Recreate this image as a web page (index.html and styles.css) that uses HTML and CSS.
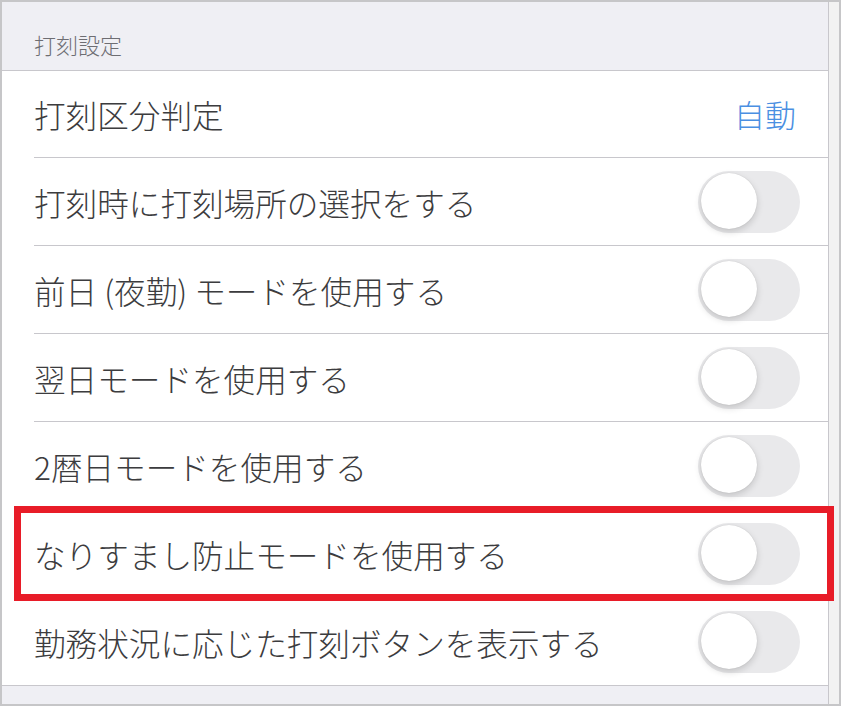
FILE: index.html
```html
<!DOCTYPE html>
<html lang="ja">
<head>
<meta charset="utf-8">
<title>打刻設定</title>
<link rel="stylesheet" href="styles.css">
</head>
<body>
<div class="frame">
  <div class="content">
    <div class="section-header">打刻設定</div>
    <div class="section">
      <div class="row"><div class="row-inner"><span class="label">打刻区分判定</span><span class="value">自動</span></div></div>
      <div class="row"><div class="row-inner"><span class="label">打刻時に打刻場所の選択をする</span><span class="switch"><span class="knob"></span></span></div></div>
      <div class="row"><div class="row-inner"><span class="label">前日 (夜勤) モードを使用する</span><span class="switch"><span class="knob"></span></span></div></div>
      <div class="row"><div class="row-inner"><span class="label">翌日モードを使用する</span><span class="switch"><span class="knob"></span></span></div></div>
      <div class="row"><div class="row-inner"><span class="label">2暦日モードを使用する</span><span class="switch"><span class="knob"></span></span></div></div>
      <div class="row"><div class="row-inner"><span class="label">なりすまし防止モードを使用する</span><span class="switch"><span class="knob"></span></span></div></div>
      <div class="row"><div class="row-inner"><span class="label">勤務状況に応じた打刻ボタンを表示する</span><span class="switch"><span class="knob"></span></span></div></div>
    </div>
    <div class="section-footer"></div>
  </div>
  <div class="strip"></div>
  <div class="highlight"></div>
</div>
</body>
</html>
```
FILE: styles.css
```css
html, body {
  margin: 0;
  padding: 0;
  background: #ffffff;
}
body {
  font-family: "Noto Sans CJK JP", "Noto Sans", sans-serif;
}
.frame {
  position: relative;
  box-sizing: border-box;
  width: 841px;
  height: 706px;
  border: 2px solid #c6c6c8;
  display: flex;
  overflow: hidden;
}
.content {
  width: 826px;
  border-right: 1px solid #c8c7cc;
  display: flex;
  flex-direction: column;
  background: #ffffff;
}
.strip {
  flex: 1;
  background: #f2f2f2;
}
.section-header {
  box-sizing: border-box;
  height: 69px;
  padding: 27px 0 0 32px;
  background: #efeff4;
  color: #6d6d72;
  font-size: 22px;
  font-weight: 300;
  line-height: 30px;
  border-bottom: 1px solid #c8c7cc;
}
.section {
  border-bottom: 1px solid #c8c7cc;
}
.row {
  padding-left: 32px;
}
.row-inner {
  box-sizing: border-box;
  height: 88px;
  display: flex;
  align-items: center;
  justify-content: space-between;
  padding-right: 28px;
  border-bottom: 1px solid #c8c7cc;
}
.row:first-child .row-inner {
  height: 87px;
  padding-right: 32px;
}
.row:last-child .row-inner {
  border-bottom: none;
  height: 87px;
}
.label {
  font-size: 31.6px;
  font-weight: 300;
  color: #3c3c3e;
  line-height: 40px;
}
.value {
  font-size: 31px;
  font-weight: 300;
  color: #4a8fe2;
  line-height: 40px;
}
.switch {
  position: relative;
  width: 102px;
  height: 62px;
  border-radius: 31px;
  background: #e9e9eb;
  flex-shrink: 0;
}
.knob {
  position: absolute;
  left: 3px;
  top: 2px;
  width: 56px;
  height: 56px;
  border-radius: 50%;
  background: #ffffff;
  box-shadow: 0 3px 7px rgba(0, 0, 0, 0.16), 0 0 1px rgba(0, 0, 0, 0.18);
}
.section-footer {
  flex: 1;
  background: #efeff4;
}
.highlight {
  position: absolute;
  left: 12px;
  top: 504px;
  width: 820px;
  height: 95px;
  box-sizing: border-box;
  border: 7px solid #e81c28;
}
```
